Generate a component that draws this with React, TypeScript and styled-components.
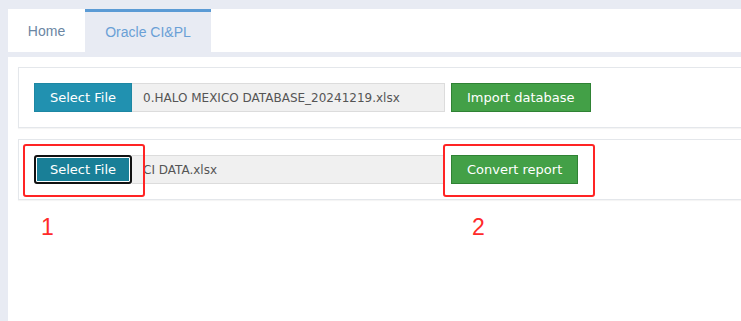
import React from 'react';
import styled, { createGlobalStyle, css } from 'styled-components';

const GlobalStyle = createGlobalStyle`
  html, body {
    margin: 0;
    padding: 0;
    background: #e8ebf3;
  }
  body {
    font-family: "DejaVu Sans", Verdana, sans-serif;
  }
`;

const Page = styled.div`
  width: 741px;
  height: 321px;
  box-sizing: border-box;
  padding: 9px 0 0 8px;
  overflow: hidden;
  display: flex;
  flex-direction: column;
`;

const TabBar = styled.div`
  display: flex;
  height: 43px;
  background: #fff;
`;

const Tab = styled.div<{ active?: boolean }>`
  display: flex;
  align-items: center;
  justify-content: center;
  box-sizing: border-box;
  font-family: "Liberation Sans", Arial, sans-serif;
  font-size: 14px;
  color: #6b86a3;
  padding: 0 20px;
  width: 77px;
  ${props =>
    props.active &&
    css`
      width: 126px;
      background: #e8ebf3;
      border-top: 3px solid #5b9bd5;
      color: #6aa0d6;
    `}
`;

const Content = styled.div`
  position: relative;
  flex: 1;
  margin-top: 5px;
  background: #fff;
  padding: 10px 0 0 10px;
  display: flex;
  flex-direction: column;
  gap: 11px;
`;

const Panel = styled.div`
  border: 1px solid #e4e7eb;
  border-right: none;
  box-shadow: 0 1px 1px rgba(0, 0, 0, 0.04);
  padding: 15px;
  display: flex;
  align-items: center;
`;

const Button = styled.button<{ variant: 'teal' | 'green'; focused?: boolean }>`
  box-sizing: border-box;
  height: 29px;
  padding: 0 15px;
  font-family: "DejaVu Sans", Verdana, sans-serif;
  font-size: 13px;
  color: #fff;
  border: 1px solid;
  border-radius: 0;
  cursor: pointer;
  white-space: nowrap;
  ${props =>
    props.variant === 'teal'
      ? css`
          background: #2191b0;
          border-color: #1d87a3;
        `
      : css`
          background: #43a047;
          border-color: #2f8234;
        `}
  ${props =>
    props.focused &&
    css`
      background: #197f97;
      border: 2px solid #111;
      border-radius: 3px;
      box-shadow: inset 0 0 0 1px #fff;
      padding: 0 14px;
    `}
`;

const FileName = styled.div`
  box-sizing: border-box;
  width: 313px;
  height: 29px;
  margin-right: 6px;
  padding: 0 11px;
  display: flex;
  align-items: center;
  background: #f0f0f0;
  border: 1px solid #dcdcdc;
  border-left: none;
  font-size: 12px;
  color: #555;
  white-space: nowrap;
  overflow: hidden;
`;

const Marker = styled.div<{ left: number; width: number }>`
  position: absolute;
  top: 87px;
  left: ${props => props.left}px;
  width: ${props => props.width}px;
  height: 53px;
  box-sizing: border-box;
  border: 2px solid #ff2424;
  border-radius: 3px;
`;

const MarkerLabel = styled.span<{ left: number }>`
  position: absolute;
  top: 157px;
  left: ${props => props.left}px;
  font-family: "Liberation Sans", Arial, sans-serif;
  font-size: 23px;
  color: #ff2a2a;
`;

export default function App() {
  return (
    <>
      <GlobalStyle />
      <Page>
        <TabBar>
          <Tab>Home</Tab>
          <Tab active>Oracle CI&amp;PL</Tab>
        </TabBar>
        <Content>
          <Panel>
            <Button variant="teal">Select File</Button>
            <FileName>0.HALO MEXICO DATABASE_20241219.xlsx</FileName>
            <Button variant="green">Import database</Button>
          </Panel>
          <Panel>
            <Button variant="teal" focused>
              Select File
            </Button>
            <FileName>CI DATA.xlsx</FileName>
            <Button variant="green">Convert report</Button>
          </Panel>
          <Marker left={15} width={122} />
          <Marker left={435} width={152} />
          <MarkerLabel left={33}>1</MarkerLabel>
          <MarkerLabel left={464}>2</MarkerLabel>
        </Content>
      </Page>
    </>
  );
}
